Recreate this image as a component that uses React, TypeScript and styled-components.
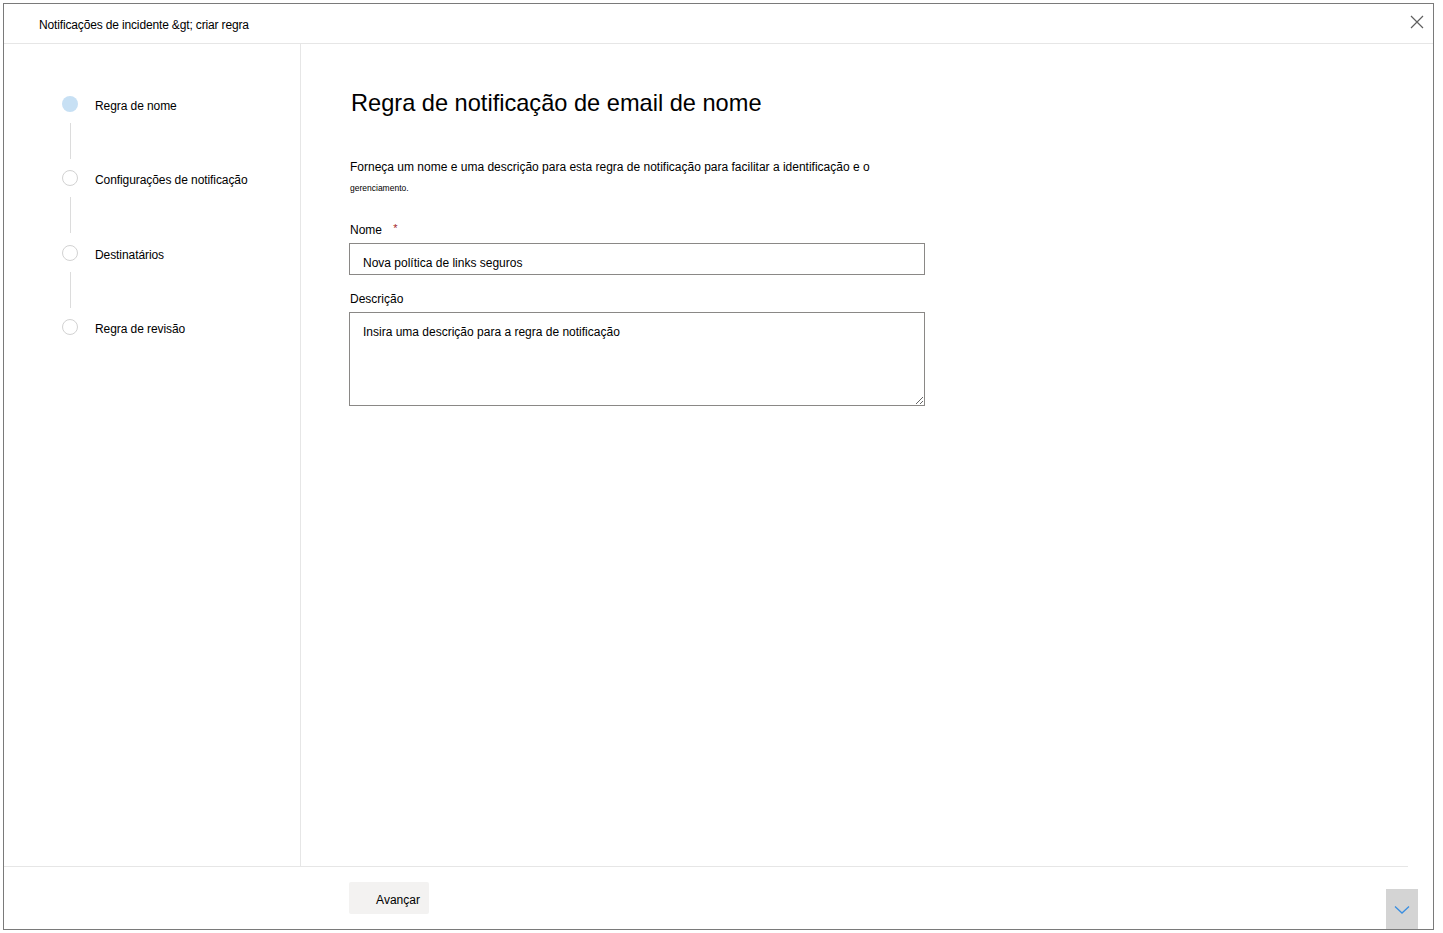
import React from "react";
import styled, { createGlobalStyle } from "styled-components";

const GlobalStyle = createGlobalStyle`
  html, body {
    margin: 0;
    padding: 0;
    background: #fff;
  }
  body {
    font-family: "Segoe UI", "Liberation Sans", Arial, sans-serif;
    color: #000;
  }
`;

const steps = [
  "Regra de nome",
  "Configurações de notificação",
  "Destinatários",
  "Regra de revisão",
];

const App = () => {
  return (
    <>
      <GlobalStyle />
      <Frame>
        <Header>
          <Title>Notificações de incidente &amp;gt; criar regra</Title>
          <CloseButton aria-label="Fechar">
            <svg width="14" height="14" viewBox="0 0 14 14">
              <path d="M1 1 L13 13 M13 1 L1 13" stroke="#5f5f5f" strokeWidth="1.2" fill="none" />
            </svg>
          </CloseButton>
        </Header>
        <Body>
          <Nav>
            {steps.map((s, i) => (
              <React.Fragment key={s}>
                <Step>
                  <Dot active={i === 0} />
                  <StepLabel>{s}</StepLabel>
                </Step>
                {i < steps.length - 1 && <Connector />}
              </React.Fragment>
            ))}
          </Nav>
          <Main>
            <Heading>Regra de notificação de email de nome</Heading>
            <Intro>
              Forneça um nome e uma descrição para esta regra de notificação para facilitar a identificação e o
              <small>gerenciamento.</small>
            </Intro>
            <Label gap={21}>
              Nome <Required>*</Required>
            </Label>
            <TextInput readOnly defaultValue="Nova política de links seguros" />
            <Label gap={14}>Descrição</Label>
            <TextArea defaultValue="Insira uma descrição para a regra de notificação" />
          </Main>
        </Body>
        <Footer>
          <NextButton>Avançar</NextButton>
        </Footer>
        <ScrollDown aria-label="Rolar">
          <svg width="16" height="10" viewBox="0 0 16 10">
            <polyline points="1,1.5 8,8 15,1.5" stroke="#3a8ee0" strokeWidth="1.3" fill="none" />
          </svg>
        </ScrollDown>
      </Frame>
    </>
  );
};

export default App;

const Frame = styled.div`
  position: relative;
  box-sizing: border-box;
  margin: 3px;
  width: 1431px;
  height: 927px;
  border: 1px solid #7a7a7a;
  display: flex;
  flex-direction: column;
`;

const Header = styled.div`
  height: 39px;
  flex-shrink: 0;
  border-bottom: 1px solid #e6e6e6;
  display: flex;
  align-items: center;
  justify-content: space-between;
  padding: 0 8px 0 35px;
`;

const Title = styled.div`
  font-size: 12px;
  letter-spacing: -0.15px;
  margin-top: 2px;
`;

const CloseButton = styled.button`
  border: none;
  background: none;
  padding: 0;
  width: 16px;
  height: 16px;
  display: flex;
  align-items: center;
  justify-content: center;
  margin-top: -3px;
`;

const Body = styled.div`
  flex: 1;
  display: flex;
  min-height: 0;
`;

const Nav = styled.div`
  width: 297px;
  flex-shrink: 0;
  border-right: 1px solid #e6e6e6;
  padding: 52px 0 0 58px;
  box-sizing: border-box;
  display: flex;
  flex-direction: column;
`;

const Step = styled.div`
  display: flex;
  align-items: center;
  height: 16px;
`;

const Dot = styled.span<{ active?: boolean }>`
  box-sizing: border-box;
  width: 16px;
  height: 16px;
  border-radius: 50%;
  flex-shrink: 0;
  background: ${(p) => (p.active ? "#c7e0f4" : "#fff")};
  border: ${(p) => (p.active ? "none" : "1px solid #d2d2d2")};
`;

const StepLabel = styled.span`
  font-size: 12px;
  letter-spacing: -0.08px;
  margin-left: 17px;
  margin-top: 4px;
  white-space: nowrap;
`;

const Connector = styled.div`
  width: 1px;
  height: 36px;
  background: #dcdcdc;
  margin: 11px 0 11.4px 7.5px;
`;

const Main = styled.div`
  flex: 1;
  padding: 43px 0 0 48px;
  display: flex;
  flex-direction: column;
  align-items: flex-start;
`;

const Heading = styled.h1`
  margin: 0;
  font-size: 23.6px;
  font-weight: 400;
  line-height: 32px;
  padding-left: 2px;
`;

const Intro = styled.p`
  margin: 36px 0 0 1px;
  font-size: 12px;
  line-height: 22px;
  width: 560px;
  padding-top: 1px;

  small {
    display: block;
    font-size: 8.5px;
    margin-top: -1px;
  }
`;

const Label = styled.div<{ gap: number }>`
  font-size: 12px;
  line-height: 20px;
  margin: ${(p) => p.gap}px 0 3px 1px;
`;

const Required = styled.span`
  color: #a4262c;
  font-size: 11px;
  vertical-align: top;
  margin-left: 8px;
  position: relative;
  top: -2px;
`;

const TextInput = styled.input`
  box-sizing: border-box;
  width: 576px;
  height: 32px;
  border: 1px solid #8a8886;
  border-radius: 0;
  padding: 8px 12px 0 13px;
  font-family: inherit;
  font-size: 12px;
  color: #000;
  outline: none;
`;

const TextArea = styled.textarea`
  box-sizing: border-box;
  width: 576px;
  height: 94px;
  border: 1px solid #8a8886;
  border-radius: 0;
  padding: 11px 12px 0 13px;
  font-family: inherit;
  font-size: 12px;
  line-height: 16px;
  color: #000;
  resize: vertical;
  outline: none;
`;

const Footer = styled.div`
  box-sizing: border-box;
  height: 63px;
  flex-shrink: 0;
  border-top: 1px solid #e6e6e6;
  margin-right: 25px;
  padding: 15px 0 0 345px;
`;

const NextButton = styled.button`
  height: 32px;
  min-width: 80px;
  border: none;
  border-radius: 2px;
  background: #f3f2f1;
  font-family: inherit;
  font-size: 12px;
  color: #000;
  padding: 3px 9px 0 27px;
`;

const ScrollDown = styled.button`
  position: absolute;
  right: 15px;
  bottom: 0;
  width: 32px;
  height: 40px;
  border: none;
  padding: 0;
  background: #d4d4d4;
  display: flex;
  align-items: center;
  justify-content: center;
  padding-top: 2px;
`;
